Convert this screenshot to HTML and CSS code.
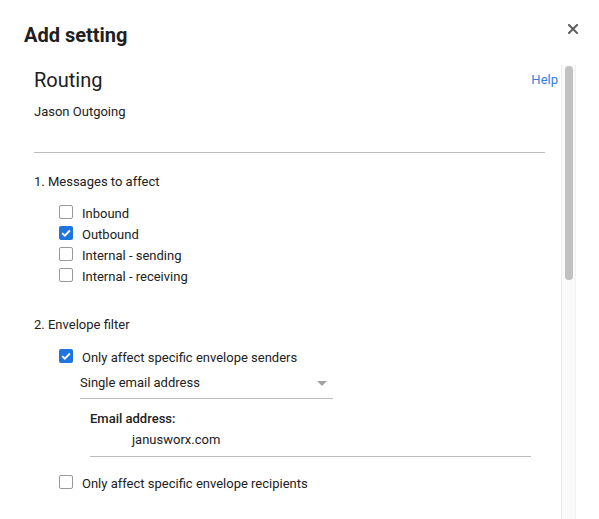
FILE: index.html
```html
<!DOCTYPE html>
<html lang="en">
<head>
<meta charset="utf-8">
<title>Add setting</title>
<link rel="stylesheet" href="styles.css">
</head>
<body>
<div class="dialog">
  <header class="dialog-header">
    <h1 class="dialog-title">Add setting</h1>
    <button class="close-btn" aria-label="Close">
      <svg width="10" height="10" viewBox="0 0 10 10"><path d="M1 1L9 9M9 1L1 9" stroke="#5f5f5f" stroke-width="2" stroke-linecap="square"/></svg>
    </button>
  </header>

  <div class="panel">
    <div class="content">
      <div class="title-row">
        <h2 class="setting-name">Routing</h2>
        <a class="help-link" href="#">Help</a>
      </div>
      <p class="description">Jason Outgoing</p>
      <hr class="divider">

      <section class="section">
        <h3 class="section-title">1. Messages to affect</h3>
        <ul class="option-list">
          <li class="option"><span class="checkbox"></span><span>Inbound</span></li>
          <li class="option"><span class="checkbox checked"><svg width="14" height="14" viewBox="0 0 14 14"><path d="M3.2 7.2L5.8 9.7L10.9 4.5" fill="none" stroke="#fff" stroke-width="1.8"/></svg></span><span>Outbound</span></li>
          <li class="option"><span class="checkbox"></span><span>Internal - sending</span></li>
          <li class="option"><span class="checkbox"></span><span>Internal - receiving</span></li>
        </ul>
      </section>

      <section class="section section-envelope">
        <h3 class="section-title">2. Envelope filter</h3>
        <div class="option-group">
          <div class="option"><span class="checkbox checked"><svg width="14" height="14" viewBox="0 0 14 14"><path d="M3.2 7.2L5.8 9.7L10.9 4.5" fill="none" stroke="#fff" stroke-width="1.8"/></svg></span><span>Only affect specific envelope senders</span></div>
          <div class="sub-panel">
            <div class="select">
              <span>Single email address</span>
              <span class="select-arrow"></span>
            </div>
            <div class="field">
              <label class="field-label">Email address:</label>
              <div class="field-input">janusworx.com</div>
            </div>
          </div>
          <div class="option option-last"><span class="checkbox"></span><span>Only affect specific envelope recipients</span></div>
        </div>
      </section>
    </div>

    <div class="scrollbar">
      <div class="scroll-thumb"></div>
    </div>
  </div>
</div>
</body>
</html>
```

FILE: styles.css
```css
* {
  box-sizing: border-box;
}

html, body {
  margin: 0;
  padding: 0;
  background: #fff;
}

body {
  font-family: Roboto, "Liberation Sans", Arial, sans-serif;
  color: #212121;
  font-size: 13px;
  line-height: 16px;
}

.dialog {
  display: flex;
  flex-direction: column;
  width: 599px;
  height: 519px;
  overflow: hidden;
}

/* header */
.dialog-header {
  display: flex;
  justify-content: space-between;
  align-items: flex-start;
  padding: 23px 21px 0 24px;
  height: 65px;
}

.dialog-title {
  margin: 0;
  font-size: 20px;
  line-height: 24px;
  font-weight: 700;
  color: #202020;
}

.close-btn {
  margin-top: 1px;
  padding: 0;
  border: 0;
  background: none;
  width: 10px;
  height: 10px;
  display: flex;
}

/* body with scroll track */
.panel {
  flex: 1;
  display: flex;
  margin: 0 23px 0 24px;
  min-height: 0;
}

.content {
  flex: 1;
  padding: 0 3px 0 10px;
}

.title-row {
  display: flex;
  justify-content: space-between;
  align-items: flex-start;
}

.setting-name {
  margin: 0;
  font-size: 20px;
  line-height: 30px;
  font-weight: 400;
  color: #202020;
}

.help-link {
  margin-top: 7px;
  color: #2f7fe0;
  text-decoration: none;
}

.description {
  margin: 9px 0 0;
}

.divider {
  margin: 32px 13px 0 0;
  border: 0;
  height: 1px;
  background: #bdbdbd;
}

.section-title {
  margin: 0;
  font-size: 13px;
  font-weight: 400;
}

.section {
  margin-top: 21px;
}

.section-envelope {
  margin-top: 30px;
}

.option-list {
  list-style: none;
  margin: 13px 0 0;
  padding: 0 0 0 25px;
}

.option-group {
  margin-top: 14px;
  padding-left: 25px;
}

.option {
  display: flex;
  align-items: center;
  gap: 9px;
  height: 21px;
  line-height: 21px;
}

.option-last {
  margin-top: 16px;
}

.checkbox {
  flex: none;
  width: 14px;
  height: 14px;
  margin-bottom: 3px;
  border: 1.5px solid #999;
  border-radius: 2px;
  display: flex;
}

.checkbox.checked {
  border: 0;
  background: #1f74e0;
}

/* nested sender options */
.sub-panel {
  padding-left: 21px;
}

.select {
  width: 253px;
  margin-top: 7px;
  padding-bottom: 7px;
  border-bottom: 1px solid #bdbdbd;
  display: flex;
  justify-content: space-between;
  align-items: center;
}

.select-arrow {
  width: 0;
  height: 0;
  margin-right: 6px;
  border-left: 5px solid transparent;
  border-right: 5px solid transparent;
  border-top: 5px solid #a2a2a2;
}

.field {
  margin: 12px 0 0 10px;
  width: 441px;
}

.field-label {
  display: block;
  font-weight: 500;
}

.field-input {
  margin-top: 5px;
  padding: 0 0 8px 42px;
  border-bottom: 1px solid #bdbdbd;
}

/* scroll track */
.scrollbar {
  flex: none;
  width: 15px;
  background: #fafafa;
  border-left: 1px solid #ececec;
  border-right: 1px solid #f2f2f2;
  padding: 1px 2px 0 3px;
}

.scroll-thumb {
  width: 8px;
  height: 214px;
  border-radius: 4px;
  background: #c1c1c1;
}
```
